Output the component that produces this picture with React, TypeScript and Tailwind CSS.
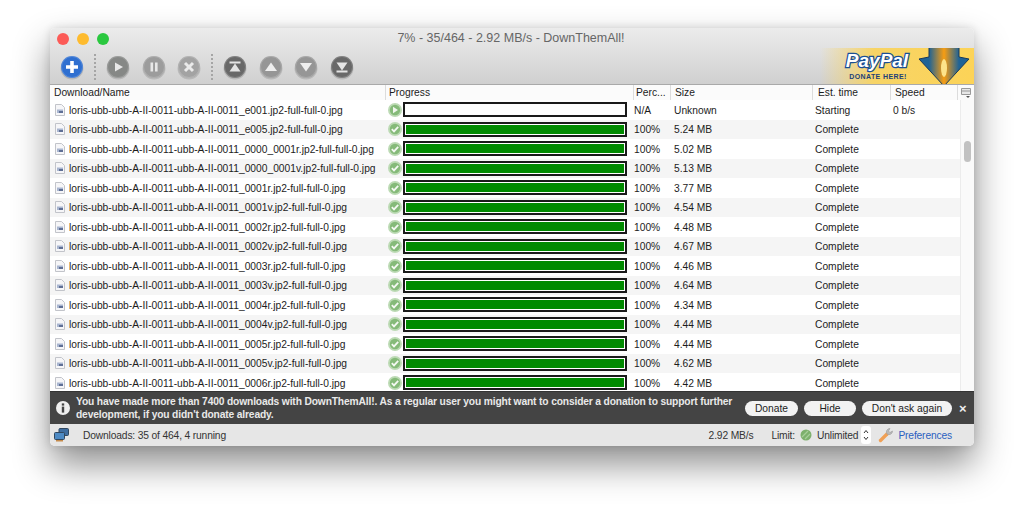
const rows = [
  { name: 'loris-ubb-ubb-A-II-0011-ubb-A-II-0011_e001.jp2-full-full-0.jpg', perc: 'N/A', size: 'Unknown', time: 'Starting', speed: '0 b/s', running: true },
  { name: 'loris-ubb-ubb-A-II-0011-ubb-A-II-0011_e005.jp2-full-full-0.jpg', perc: '100%', size: '5.24 MB', time: 'Complete', speed: '' },
  { name: 'loris-ubb-ubb-A-II-0011-ubb-A-II-0011_0000_0001r.jp2-full-full-0.jpg', perc: '100%', size: '5.02 MB', time: 'Complete', speed: '' },
  { name: 'loris-ubb-ubb-A-II-0011-ubb-A-II-0011_0000_0001v.jp2-full-full-0.jpg', perc: '100%', size: '5.13 MB', time: 'Complete', speed: '' },
  { name: 'loris-ubb-ubb-A-II-0011-ubb-A-II-0011_0001r.jp2-full-full-0.jpg', perc: '100%', size: '3.77 MB', time: 'Complete', speed: '' },
  { name: 'loris-ubb-ubb-A-II-0011-ubb-A-II-0011_0001v.jp2-full-full-0.jpg', perc: '100%', size: '4.54 MB', time: 'Complete', speed: '' },
  { name: 'loris-ubb-ubb-A-II-0011-ubb-A-II-0011_0002r.jp2-full-full-0.jpg', perc: '100%', size: '4.48 MB', time: 'Complete', speed: '' },
  { name: 'loris-ubb-ubb-A-II-0011-ubb-A-II-0011_0002v.jp2-full-full-0.jpg', perc: '100%', size: '4.67 MB', time: 'Complete', speed: '' },
  { name: 'loris-ubb-ubb-A-II-0011-ubb-A-II-0011_0003r.jp2-full-full-0.jpg', perc: '100%', size: '4.46 MB', time: 'Complete', speed: '' },
  { name: 'loris-ubb-ubb-A-II-0011-ubb-A-II-0011_0003v.jp2-full-full-0.jpg', perc: '100%', size: '4.64 MB', time: 'Complete', speed: '' },
  { name: 'loris-ubb-ubb-A-II-0011-ubb-A-II-0011_0004r.jp2-full-full-0.jpg', perc: '100%', size: '4.34 MB', time: 'Complete', speed: '' },
  { name: 'loris-ubb-ubb-A-II-0011-ubb-A-II-0011_0004v.jp2-full-full-0.jpg', perc: '100%', size: '4.44 MB', time: 'Complete', speed: '' },
  { name: 'loris-ubb-ubb-A-II-0011-ubb-A-II-0011_0005r.jp2-full-full-0.jpg', perc: '100%', size: '4.44 MB', time: 'Complete', speed: '' },
  { name: 'loris-ubb-ubb-A-II-0011-ubb-A-II-0011_0005v.jp2-full-full-0.jpg', perc: '100%', size: '4.62 MB', time: 'Complete', speed: '' },
  { name: 'loris-ubb-ubb-A-II-0011-ubb-A-II-0011_0006r.jp2-full-full-0.jpg', perc: '100%', size: '4.42 MB', time: 'Complete', speed: '' },
];

function ToolButton({ color, children }: { color: string; children: React.ReactNode }) {
  return (
    <svg width="24" height="25" viewBox="0 0 24 25" className="shrink-0">
      <ellipse cx="12" cy="13.5" rx="11.5" ry="11" fill="#000" opacity="0.12" />
      <circle cx="12" cy="12" r="11" fill={color} />
      <circle cx="12" cy="12" r="10.5" fill="none" stroke="#fff" strokeOpacity="0.18" />
      {children}
    </svg>
  );
}

function Dots() {
  return <div className="h-[26px] w-0 mx-[10px] border-l-2 border-dotted border-[#a5a5a5]" />;
}

function FileIcon() {
  return (
    <svg width="10" height="12" viewBox="0 0 10 12" className="shrink-0">
      <path d="M.5.5h6l3 3v8h-9z" fill="#f6f6f8" stroke="#c2c4ca" />
      <rect x="2" y="5.5" width="6" height="3.5" fill="#a9b6d0" />
      <rect x="4" y="7" width="4" height="2" fill="#5f6f95" />
    </svg>
  );
}

function StatusIcon({ running }: { running?: boolean }) {
  return (
    <svg width="14" height="14" viewBox="0 0 14 14" className="shrink-0">
      <circle cx="7" cy="7" r="7" fill="#bcdab4" />
      <circle cx="7" cy="7" r="5.2" fill="#85ba79" />
      {running ? (
        <path d="M5 3.8 10 7l-5 3.2z" fill="#f1f6ee" />
      ) : (
        <path d="M3.8 7.2 6 9.4l4.2-4.6" fill="none" stroke="#f4f8f2" strokeWidth="1.8" />
      )}
    </svg>
  );
}

function HeaderCell({ label, className }: { label?: string; className: string }) {
  return (
    <div className={`h-full flex items-center border-r border-[#dcdcdc] ${className}`}>
      {label}
    </div>
  );
}

export default function App() {
  return (
    <div className="w-[1024px] h-[518px] bg-white overflow-hidden pt-[28px] pl-[50px] font-['Liberation_Sans',Arial,sans-serif] text-[10.25px] text-[#1c1c1c]">
      <div className="w-[924px] h-[418px] rounded-[5px] overflow-hidden flex flex-col bg-white shadow-[0_18px_36px_rgba(0,0,0,0.45),0_0_8px_rgba(0,0,0,0.12)]">
        {/* title + toolbar */}
        <div className="relative h-[57px] shrink-0 bg-gradient-to-b from-[#ececec] to-[#d0d0d0] border-b border-[#a9a9a9]">
          <div className="flex items-center gap-[8px] pl-[7px] pt-[5px]">
            <div className="w-[12px] h-[12px] rounded-full bg-[#fc5b57]" />
            <div className="w-[12px] h-[12px] rounded-full bg-[#febb2e]" />
            <div className="w-[12px] h-[12px] rounded-full bg-[#2ac83f]" />
          </div>
          <div className="absolute top-[2px] left-0 right-[2px] text-center text-[12.5px] leading-[17px] text-[#666]">
            7% - 35/464 - 2.92 MB/s - DownThemAll!
          </div>
          <div className="flex items-center pl-[10px] mt-[9px]">
            <ToolButton color="#2f6fd0">
              <path d="M12 6v12M6 12h12" stroke="#fff" strokeWidth="3.6" />
            </ToolButton>
            <Dots />
            <div className="flex items-center gap-[11.5px]">
              <ToolButton color="#868886">
                <path d="M9 7.5 17 12l-8 4.5z" fill="#e8e8e8" />
              </ToolButton>
              <ToolButton color="#9c9c9c">
                <path d="M8.5 7.5h2.6v9H8.5zM13 7.5h2.6v9H13z" fill="#e8e8e8" />
              </ToolButton>
              <ToolButton color="#a3a3a3">
                <path d="m8 8 8 8M16 8l-8 8" stroke="#eaeaea" strokeWidth="3" />
              </ToolButton>
            </div>
            <Dots />
            <div className="flex items-center gap-[11.5px]">
              <ToolButton color="#686868">
                <path d="M6.5 6.5h11v2h-11zM12 8.5l5.5 8h-11z" fill="#e4e4e4" />
              </ToolButton>
              <ToolButton color="#969696">
                <path d="M12 7.5 18 16H6z" fill="#eeeeee" />
              </ToolButton>
              <ToolButton color="#969696">
                <path d="M12 16.5 6 8h12z" fill="#eeeeee" />
              </ToolButton>
              <ToolButton color="#686868">
                <path d="M6.5 15.5h11v2h-11zM12 15.5l-5.5-8h11z" fill="#e4e4e4" />
              </ToolButton>
            </div>
          </div>
          {/* paypal banner */}
          <div className="absolute right-0 bottom-0 w-[154px] h-[36px] overflow-hidden bg-gradient-to-r from-transparent via-[#f7d466] via-35% to-[#fcd357]">
            <div className="absolute left-[22px] top-[1px] w-[70px] text-center italic font-bold text-[19px] leading-[23px] text-white [-webkit-text-stroke:2.5px_#1a4f94] [paint-order:stroke]">
              PayPal
            </div>
            <div className="absolute left-[22px] top-[24px] w-[72px] text-center font-bold text-[7px] leading-[10px] tracking-[0.4px] text-[#1d3f78]">
              DONATE HERE!
            </div>
            <svg width="52" height="36" viewBox="0 0 52 36" className="absolute left-[98px] top-0">
              <defs>
                <linearGradient id="arrowFill" x1="0" x2="1" y1="0" y2="0">
                  <stop offset="0.2" stopColor="#1f6396" />
                  <stop offset="0.5" stopColor="#f79d12" />
                  <stop offset="0.8" stopColor="#1f6396" />
                </linearGradient>
              </defs>
              <path d="M11-2h30v11l10 2L26 38 1 11l10-2z" fill="url(#arrowFill)" stroke="#18395a" strokeWidth="1" />
              <ellipse cx="26" cy="20" rx="3" ry="9" fill="#fde38a" />
            </svg>
          </div>
        </div>

        {/* column headers */}
        <div className="h-[15px] shrink-0 flex items-center bg-[#fbfbfb] leading-[15px]">
          <HeaderCell label="Download/Name" className="w-[336px] pl-[4px]" />
          <HeaderCell label="Progress" className="w-[248px] pl-[3px]" />
          <HeaderCell label="Perc..." className="w-[37px] pl-[2px]" />
          <HeaderCell label="Size" className="w-[142px] pl-[4px]" />
          <HeaderCell label="Est. time" className="w-[78px] pl-[5px]" />
          <HeaderCell label="Speed" className="w-[67px] pl-[4px]" />
          <div className="flex-1 flex justify-center">
            <svg width="10" height="10" viewBox="0 0 10 10">
              <path d="M.5.5h9v6h-9zM.5 3h9" fill="#e8e8e8" stroke="#9a9a9a" />
              <path d="M5 8h4L7 10z" fill="#555" />
            </svg>
          </div>
        </div>

        {/* list */}
        <div className="h-[291px] shrink-0 flex overflow-hidden">
          <div className="flex-1 min-w-0">
            {rows.map((row, i) => (
              <div
                key={row.name}
                className={`h-[19.5px] flex items-center ${i % 2 === 1 ? 'bg-[#f5f5f5]' : 'bg-white'}`}
              >
                <div className="w-[336px] shrink-0 flex items-center pl-[5px] gap-[4px] whitespace-nowrap">
                  <FileIcon />
                  <span className="pt-[1px]">{row.name}</span>
                </div>
                <div className="w-[248px] shrink-0 flex items-center pl-[2px] gap-[1px]">
                  <StatusIcon running={row.running} />
                  <div className="w-[224px] h-[15px] border-2 border-[#1a1a1a] bg-white p-[1px]">
                    {!row.running && <div className="h-full bg-[#008a00]" />}
                  </div>
                </div>
                <div className="w-[37px] shrink-0 pt-[1px]">{row.perc}</div>
                <div className="w-[142px] shrink-0 pl-[3px] pt-[1px]">{row.size}</div>
                <div className="w-[78px] shrink-0 pl-[2px] pt-[1px]">{row.time}</div>
                <div className="w-[67px] shrink-0 pl-[2px] pt-[1px]">{row.speed}</div>
              </div>
            ))}
          </div>
          <div className="w-[14px] shrink-0 bg-[#fafafa] border-l border-[#ececec] pt-[41px] flex justify-center">
            <div className="w-[7px] h-[21px] rounded-full bg-[#c2c2c2]" />
          </div>
        </div>

        {/* donation notice */}
        <div className="h-[33px] shrink-0 bg-[#444] flex items-center text-white font-bold leading-[13px] border-t border-[#333]">
          <svg width="14" height="14" viewBox="0 0 14 14" className="ml-[6px] shrink-0">
            <circle cx="7" cy="7" r="7" fill="#efefef" />
            <rect x="5.8" y="2.4" width="2.4" height="2.2" fill="#444" />
            <rect x="5.8" y="5.6" width="2.4" height="6" fill="#444" />
          </svg>
          <div className="ml-[6px] w-[662px] shrink-0 tracking-[-0.15px] text-[#e9e9e9]">
            You have made more than 7400 downloads with DownThemAll!. As a regular user you might want to consider a donation to support further development, if you didn't donate already.
          </div>
          <div className="flex items-center gap-[6px] ml-[7px] font-normal text-[#222]">
            <button className="w-[53px] h-[15px] rounded-full bg-[#f2f2f2] leading-[15px]">Donate</button>
            <button className="w-[52px] h-[15px] rounded-full bg-[#f2f2f2] leading-[15px]">Hide</button>
            <button className="w-[90px] h-[15px] rounded-full bg-[#f2f2f2] leading-[15px]">Don't ask again</button>
          </div>
          <span className="ml-[7px] text-[13px] text-[#eee]">×</span>
        </div>

        {/* status bar */}
        <div className="flex-1 bg-[#e6e6e6] flex items-center tracking-[-0.15px] text-[#333] relative">
          <svg width="15" height="14" viewBox="0 0 15 14" className="ml-[4px] shrink-0">
            <rect x="5" y="0.5" width="9.5" height="7" rx="1" fill="#3f6d9f" stroke="#30475f" />
            <rect x="0.5" y="4.5" width="10" height="7" rx="1" fill="#4d8ac4" stroke="#30475f" />
            <rect x="2" y="12" width="7" height="1.5" fill="#c58a4a" />
          </svg>
          <span className="ml-[14px] mt-[2px]">Downloads: 35 of 464, 4 running</span>
          <span className="ml-auto mt-[2px]">2.92 MB/s</span>
          <span className="ml-[18px] mt-[2px]">Limit:</span>
          <svg width="12" height="12" viewBox="0 0 12 12" className="ml-[5px] shrink-0">
            <circle cx="6" cy="6" r="5.5" fill="#7db06c" />
            <path d="m2 8 6-6M5 10l5-5" stroke="#a7cf9a" strokeWidth="1.2" />
          </svg>
          <span className="ml-[5px] mt-[2px]">Unlimited</span>
          <div className="ml-[3px] w-[10px] h-[18px] rounded-[3px] bg-white flex items-center justify-center">
            <svg width="6" height="14" viewBox="0 0 6 14">
              <path d="m1 5 2-2.5L5 5M1 9l2 2.5L5 9" fill="none" stroke="#333" />
            </svg>
          </div>
          <svg width="16" height="16" viewBox="0 0 16 16" className="ml-[7px] shrink-0">
            <path d="M2.5 13.5 9 7" stroke="#f0a055" strokeWidth="3.4" strokeLinecap="round" />
            <path d="M9 7a3.5 3.5 0 0 1 3-5.5L10.5 4l1.5 1.5 2.5-1.5A3.5 3.5 0 0 1 9 7z" fill="#b9b9b9" stroke="#9b9b9b" strokeWidth="0.6" />
          </svg>
          <span className="ml-[4px] mr-[22px] mt-[2px] text-[#2a5fc0]">Preferences</span>
        </div>
      </div>
    </div>
  );
}
